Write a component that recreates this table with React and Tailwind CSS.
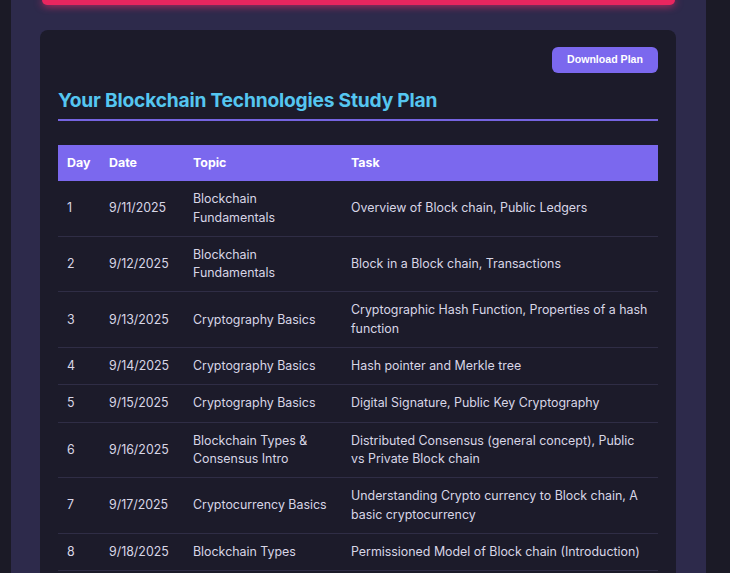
import React from 'react';

const plan = [
  { day: 1, date: '9/11/2025', topic: 'Blockchain Fundamentals', task: 'Overview of Block chain, Public Ledgers' },
  { day: 2, date: '9/12/2025', topic: 'Blockchain Fundamentals', task: 'Block in a Block chain, Transactions' },
  { day: 3, date: '9/13/2025', topic: 'Cryptography Basics', task: 'Cryptographic Hash Function, Properties of a hash function' },
  { day: 4, date: '9/14/2025', topic: 'Cryptography Basics', task: 'Hash pointer and Merkle tree' },
  { day: 5, date: '9/15/2025', topic: 'Cryptography Basics', task: 'Digital Signature, Public Key Cryptography' },
  { day: 6, date: '9/16/2025', topic: 'Blockchain Types & Consensus Intro', task: 'Distributed Consensus (general concept), Public vs Private Block chain' },
  { day: 7, date: '9/17/2025', topic: 'Cryptocurrency Basics', task: 'Understanding Crypto currency to Block chain, A basic cryptocurrency' },
  { day: 8, date: '9/18/2025', topic: 'Blockchain Types', task: 'Permissioned Model of Block chain (Introduction)' },
  { day: 9, date: '9/19/2025', topic: 'Blockchain Types', task: 'Permissionless Model of Block chain' },
  { day: 10, date: '9/20/2025', topic: 'Consensus Algorithms', task: 'Proof of Work, Proof of Stake' },
];

const App = () => {
  return (
    <div className="min-h-screen bg-[#1b1a26] flex font-['Inter',sans-serif]">
      <div className="ml-[11px] w-[695px] bg-[#2d2a4b] pl-[29px] pr-[30px] pb-8">
        {/* bottom edge of the glowing banner above */}
        <div className="h-[5px] ml-[2px] mr-[1px] rounded-b-md bg-[#e8265f] shadow-[0_0_8px_#ff2d6f]" />

        <div className="mt-[25px] bg-[#1c1b2a] rounded-lg pt-[17px] px-[18px] pb-6">
          <div className="flex justify-end">
            <button className="w-[106px] h-[26px] rounded-md bg-[#7b68ee] text-white text-[10.6px] font-bold font-['Liberation_Sans',sans-serif]">
              Download Plan
            </button>
          </div>

          <h2 className="mt-[14px] pb-[6px] border-b-2 border-[#7564e0] text-[#55c6f0] text-[19.2px] font-bold leading-[26px] tracking-[-0.2px]">
            Your Blockchain Technologies Study Plan
          </h2>

          <table className="mt-[24px] w-full table-fixed border-collapse text-[12.4px] leading-[18.3px]">
            <thead>
              <tr className="bg-[#7b68ee] text-white text-left">
                <th className="w-[42px] px-[9px] py-[9px] font-bold">Day</th>
                <th className="w-[84px] px-[9px] py-[9px] font-bold">Date</th>
                <th className="w-[158px] px-[9px] py-[9px] font-bold">Topic</th>
                <th className="px-[9px] py-[9px] font-bold">Task</th>
              </tr>
            </thead>
            <tbody className="text-[#d8d6e6]">
              {plan.map((row) => (
                <tr key={row.day} className="border-b border-[#2f2d45]">
                  <td className="px-[9px] py-[9px]">{row.day}</td>
                  <td className="px-[9px] py-[9px]">{row.date}</td>
                  <td className="px-[9px] py-[9px]">{row.topic}</td>
                  <td className="px-[9px] py-[9px]">{row.task}</td>
                </tr>
              ))}
            </tbody>
          </table>
        </div>
      </div>
    </div>
  );
};

export default App;
